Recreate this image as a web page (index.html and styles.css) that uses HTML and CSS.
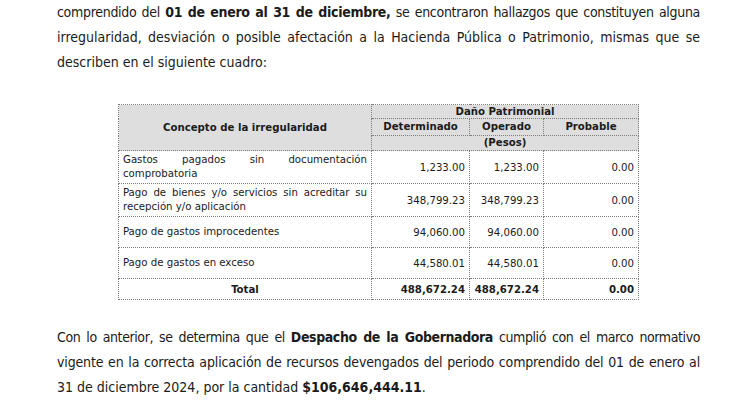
FILE: index.html
```html
<!DOCTYPE html>
<html lang="es">
<head>
<meta charset="utf-8">
<title>Daño Patrimonial</title>
<link rel="stylesheet" href="styles.css">
</head>
<body>
<div class="page">
  <p class="para">
    <span class="line tight">comprendido del <b>01 de enero al 31 de diciembre,</b> se encontraron hallazgos que constituyen alguna</span>
    <span class="line">irregularidad, desviación o posible afectación a la Hacienda Pública o Patrimonio, mismas que se</span>
    <span class="line last">describen en el siguiente cuadro:</span>
  </p>

  <table class="tabla">
    <colgroup>
      <col class="c-concepto">
      <col class="c-det">
      <col class="c-ope">
      <col class="c-pro">
    </colgroup>
    <thead>
      <tr class="h1">
        <th rowspan="3" class="concepto-h">Concepto de la irregularidad</th>
        <th colspan="3">Daño Patrimonial</th>
      </tr>
      <tr class="h2">
        <th>Determinado</th>
        <th>Operado</th>
        <th>Probable</th>
      </tr>
      <tr class="h3">
        <th colspan="3">(Pesos)</th>
      </tr>
    </thead>
    <tbody>
      <tr class="r2">
        <td class="concepto">Gastos pagados sin documentación comprobatoria</td>
        <td class="num">1,233.00</td>
        <td class="num">1,233.00</td>
        <td class="num">0.00</td>
      </tr>
      <tr class="r2">
        <td class="concepto">Pago de bienes y/o servicios sin acreditar su recepción y/o aplicación</td>
        <td class="num">348,799.23</td>
        <td class="num">348,799.23</td>
        <td class="num">0.00</td>
      </tr>
      <tr class="r1">
        <td class="concepto">Pago de gastos improcedentes</td>
        <td class="num">94,060.00</td>
        <td class="num">94,060.00</td>
        <td class="num">0.00</td>
      </tr>
      <tr class="r1">
        <td class="concepto">Pago de gastos en exceso</td>
        <td class="num">44,580.01</td>
        <td class="num">44,580.01</td>
        <td class="num">0.00</td>
      </tr>
      <tr class="total">
        <td class="total-label">Total</td>
        <td class="num">488,672.24</td>
        <td class="num">488,672.24</td>
        <td class="num">0.00</td>
      </tr>
    </tbody>
  </table>

  <p class="para p2">
    <span class="line tight3">Con lo anterior, se determina que el <b>Despacho de la Gobernadora</b> cumplió con el marco normativo</span>
    <span class="line tight2">vigente en la correcta aplicación de recursos devengados del periodo comprendido del 01 de enero al</span>
    <span class="line last">31 de diciembre 2024, por la cantidad <b>$106,646,444.11</b>.</span>
  </p>
</div>
</body>
</html>
```

FILE: styles.css
```css
html, body {
  margin: 0;
  padding: 0;
  background: #ffffff;
}

body {
  font-family: "DejaVu Sans Condensed", "DejaVu Sans", "Liberation Sans", sans-serif;
  font-stretch: condensed;
  color: #1b1b1b;
}

.page {
  width: 643px;
  padding-left: 57px;
}

.para {
  margin: 0;
  font-size: 14px;
  line-height: 25px;
}

.line {
  display: block;
  text-align: justify;
  text-align-last: justify;
}

.line.tight {
  letter-spacing: -0.3px;
}

.line.tight2 {
  letter-spacing: -0.15px;
}

.line.tight3 {
  letter-spacing: -0.4px;
}

.line.last {
  text-align-last: left;
}

.p2 {
  margin-top: 25px;
}

.tabla {
  border-collapse: collapse;
  width: 521px;
  margin: 29px auto 0;
  font-size: 11.3px;
  color: #1b1b1b;
}

.c-concepto { width: 253px; }
.c-det { width: 98px; }
.c-ope { width: 74px; }
.c-pro { width: 95px; }

.tabla th,
.tabla td {
  border: 1px dotted #7d7d7d;
  padding: 0 4px;
  vertical-align: middle;
}

.tabla th {
  background: #dedede;
  font-weight: bold;
  text-align: center;
  line-height: 12px;
}

.h1 { height: 14px; }
.h2 { height: 17px; }
.h3 { height: 15px; }

.concepto {
  text-align: justify;
  line-height: 14px;
}

.r2 { height: 33px; }
.r1 { height: 31px; }

.num {
  text-align: right;
}

.total { height: 21px; }

.total td {
  font-weight: bold;
}

.total-label {
  text-align: center;
}
```
